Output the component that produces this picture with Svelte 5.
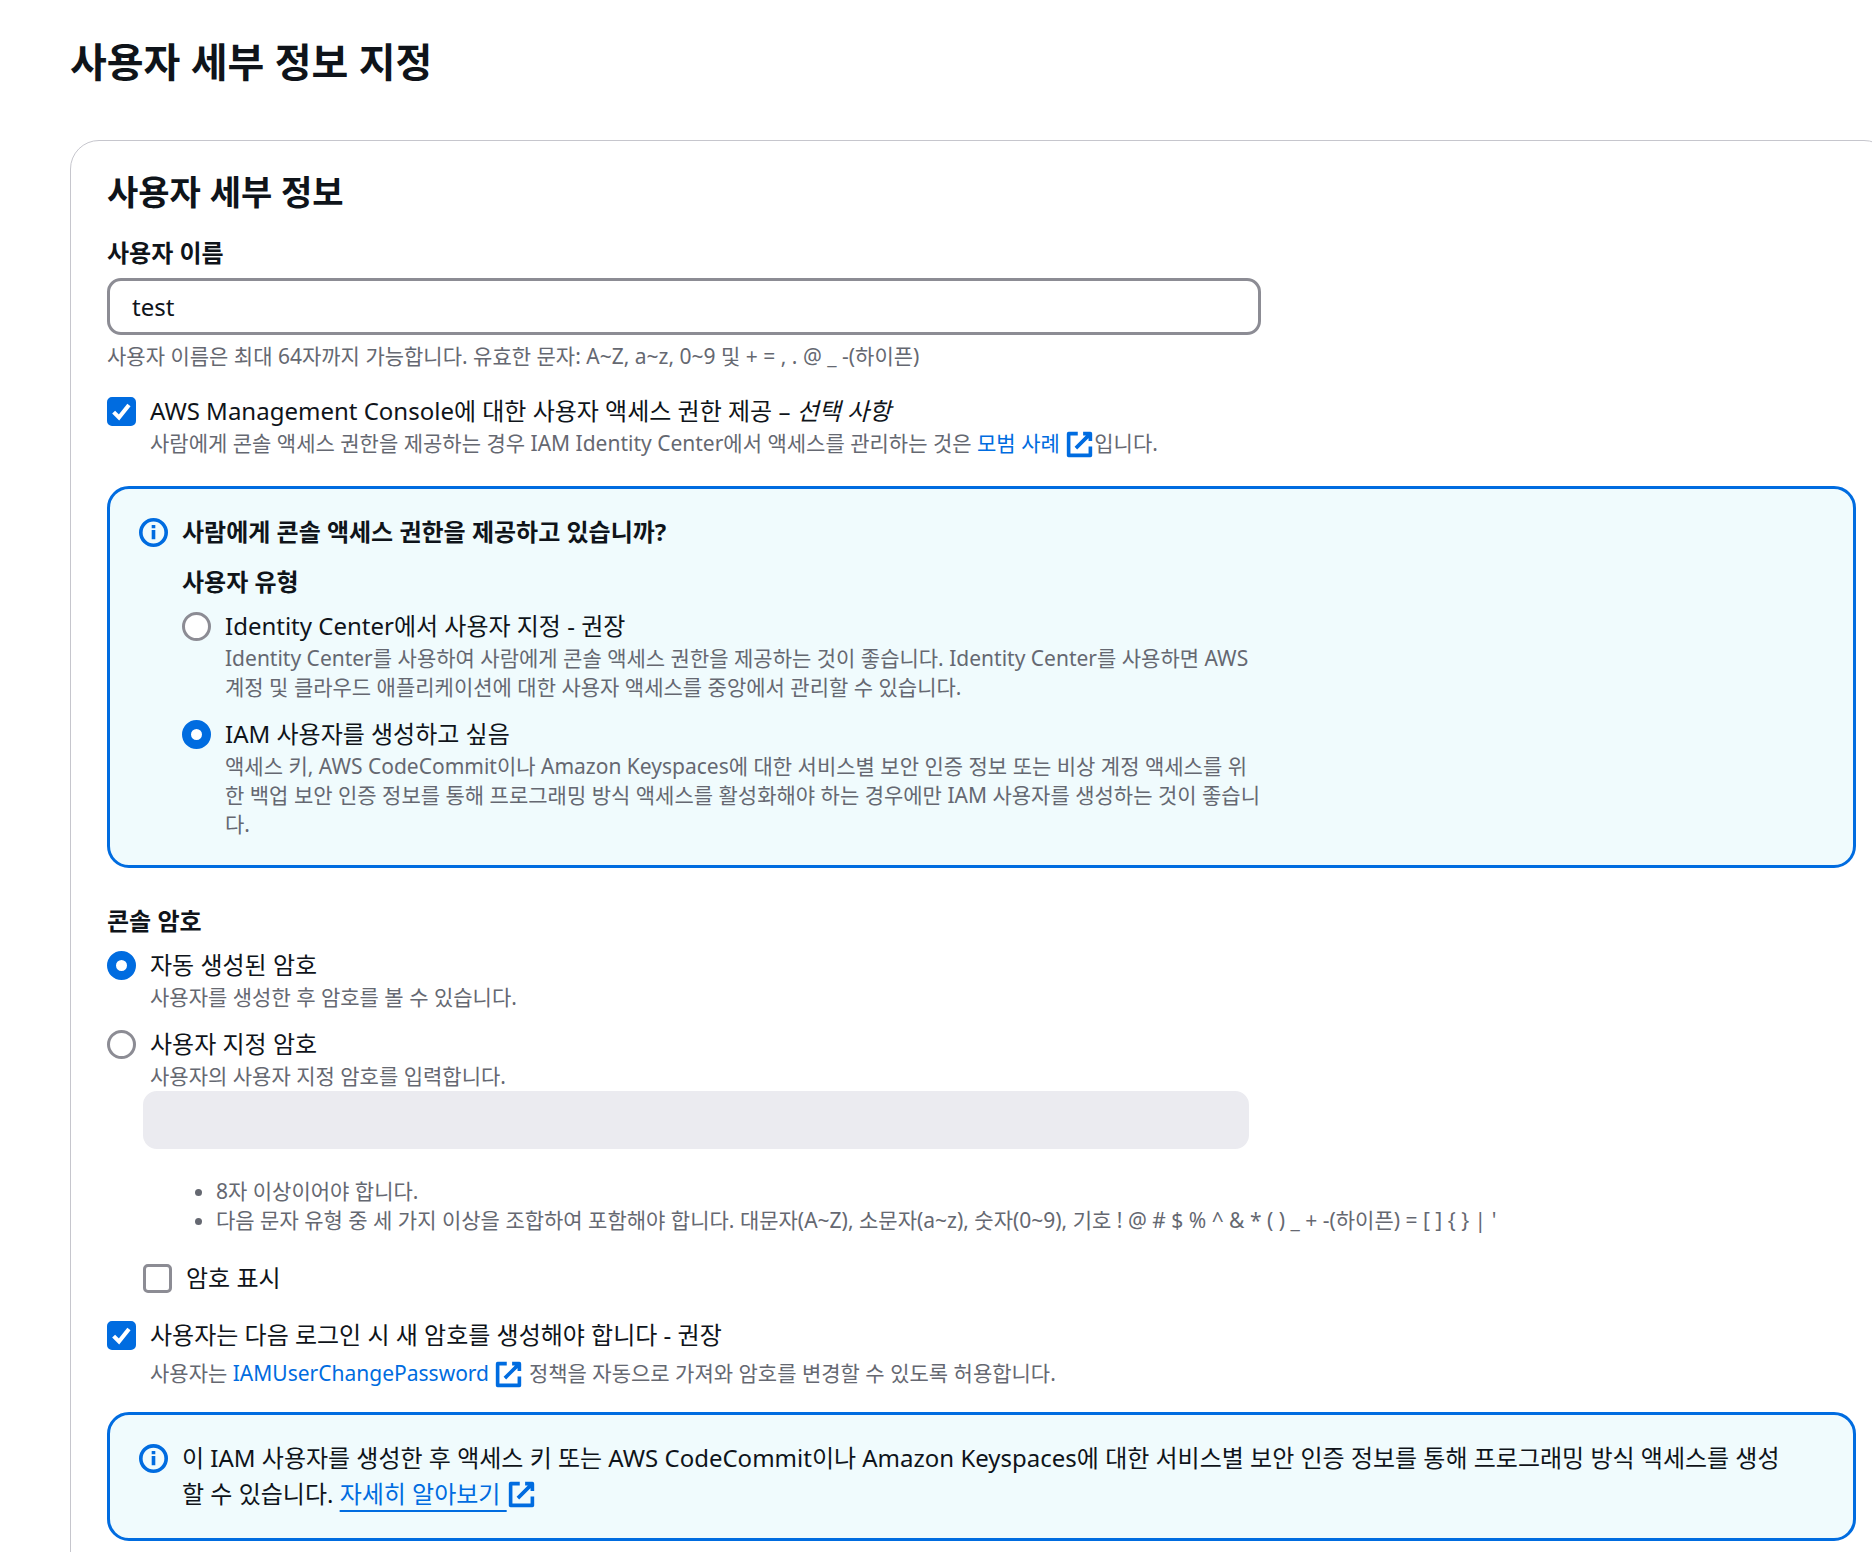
<script lang="ts">
  let userName = $state('test');
  let consoleAccess = $state(true);
  let userType = $state('iam');
  let passwordType = $state('auto');
  let customPassword = $state('');
  let showPassword = $state(false);
  let resetOnLogin = $state(true);
</script>

{#snippet externalIcon()}
  <svg class="external" viewBox="0 0 16 16" aria-hidden="true">
    <path d="M10 2h4v4M6 10l8-8M14 9.05V14H2V2h5.04" />
  </svg>
{/snippet}

{#snippet infoIcon()}
  <svg class="info" viewBox="0 0 16 16" aria-hidden="true">
    <circle cx="8" cy="8" r="7" />
    <path d="M8 11.7V6.6M8 5.6V3.8" />
  </svg>
{/snippet}

{#snippet checkMark()}
  <svg class="mark" viewBox="0 0 14 14" aria-hidden="true">
    <path d="M3.2 7.3l2.6 2.6 4.8-6" />
  </svg>
{/snippet}

<main class="page">
  <h1>사용자 세부 정보 지정</h1>

  <section class="card">
    <h2>사용자 세부 정보</h2>

    <div class="field">
      <label class="title" for="user-name">사용자 이름</label>
      <input id="user-name" class="text-input" type="text" bind:value={userName} />
      <p class="hint">사용자 이름은 최대 64자까지 가능합니다. 유효한 문자: A~Z, a~z, 0~9 및 + = , . @ _ -(하이픈)</p>
    </div>

    <div class="choice console-access">
      <span class="control">
        <input id="console-access" type="checkbox" bind:checked={consoleAccess} />
        {#if consoleAccess}{@render checkMark()}{/if}
      </span>
      <div class="choice-text">
        <label for="console-access">AWS Management Console에 대한 사용자 액세스 권한 제공 – <em>선택 사항</em></label>
        <p class="desc">
          사람에게 콘솔 액세스 권한을 제공하는 경우 IAM Identity Center에서 액세스를 관리하는 것은 <a href="#best-practice">모범 사례 {@render externalIcon()}</a>입니다.
        </p>
      </div>
    </div>

    <div class="alert">
      {@render infoIcon()}
      <div class="alert-body">
        <p class="title">사람에게 콘솔 액세스 권한을 제공하고 있습니까?</p>
        <fieldset class="user-type">
          <legend class="title">사용자 유형</legend>
          <div class="options">
            <div class="choice">
              <span class="control">
                <input id="type-idc" type="radio" value="idc" bind:group={userType} />
              </span>
              <div class="choice-text">
                <label for="type-idc">Identity Center에서 사용자 지정 - 권장</label>
                <p class="desc">Identity Center를 사용하여 사람에게 콘솔 액세스 권한을 제공하는 것이 좋습니다. Identity Center를 사용하면 AWS 계정 및 클라우드 애플리케이션에 대한 사용자 액세스를 중앙에서 관리할 수 있습니다.</p>
              </div>
            </div>
            <div class="choice">
              <span class="control">
                <input id="type-iam" type="radio" value="iam" bind:group={userType} />
              </span>
              <div class="choice-text">
                <label for="type-iam">IAM 사용자를 생성하고 싶음</label>
                <p class="desc">액세스 키, AWS CodeCommit이나 Amazon Keyspaces에 대한 서비스별 보안 인증 정보 또는 비상 계정 액세스를 위한 백업 보안 인증 정보를 통해 프로그래밍 방식 액세스를 활성화해야 하는 경우에만 IAM 사용자를 생성하는 것이 좋습니다.</p>
              </div>
            </div>
          </div>
        </fieldset>
      </div>
    </div>

    <fieldset class="password">
      <legend class="title">콘솔 암호</legend>
      <div class="options">
        <div class="choice">
          <span class="control">
            <input id="pw-auto" type="radio" value="auto" bind:group={passwordType} />
          </span>
          <div class="choice-text">
            <label for="pw-auto">자동 생성된 암호</label>
            <p class="desc">사용자를 생성한 후 암호를 볼 수 있습니다.</p>
          </div>
        </div>
        <div class="choice">
          <span class="control">
            <input id="pw-custom" type="radio" value="custom" bind:group={passwordType} />
          </span>
          <div class="choice-text">
            <label for="pw-custom">사용자 지정 암호</label>
            <p class="desc">사용자의 사용자 지정 암호를 입력합니다.</p>
          </div>
        </div>
      </div>

      <div class="custom-password">
        <input
          class="text-input"
          type={showPassword ? 'text' : 'password'}
          aria-label="사용자 지정 암호"
          disabled={passwordType !== 'custom'}
          bind:value={customPassword}
        />
        <ul class="rules">
          <li>8자 이상이어야 합니다.</li>
          <li>다음 문자 유형 중 세 가지 이상을 조합하여 포함해야 합니다. 대문자(A~Z), 소문자(a~z), 숫자(0~9), 기호 ! @ # $ % ^ & * ( ) _ + -(하이픈) = [ ] {'{ }'} | '</li>
        </ul>
        <div class="choice">
          <span class="control">
            <input id="show-password" type="checkbox" bind:checked={showPassword} />
            {#if showPassword}{@render checkMark()}{/if}
          </span>
          <label for="show-password">암호 표시</label>
        </div>
      </div>
    </fieldset>

    <div class="choice reset">
      <span class="control">
        <input id="reset-password" type="checkbox" bind:checked={resetOnLogin} />
        {#if resetOnLogin}{@render checkMark()}{/if}
      </span>
      <div class="choice-text spaced">
        <label for="reset-password">사용자는 다음 로그인 시 새 암호를 생성해야 합니다 - 권장</label>
        <p class="desc">
          사용자는 <a href="#change-password">IAMUserChangePassword {@render externalIcon()}</a> 정책을 자동으로 가져와 암호를 변경할 수 있도록 허용합니다.
        </p>
      </div>
    </div>

    <div class="alert">
      {@render infoIcon()}
      <p class="alert-body">
        이 IAM 사용자를 생성한 후 액세스 키 또는 AWS CodeCommit이나 Amazon Keyspaces에 대한 서비스별 보안 인증 정보를 통해 프로그래밍 방식 액세스를 생성할 수 있습니다. <a class="underlined" href="#learn-more">자세히 알아보기 {@render externalIcon()}</a>
      </p>
    </div>
  </section>
</main>

<style>
  :global(body) {
    background: #ffffff;
  }
  .page {
    box-sizing: border-box;
    height: 100vh;
    overflow: hidden;
    padding: 38px 0 0 70px;
    font-family: 'Noto Sans', 'Noto Sans CJK KR', sans-serif;
    font-size: 24px;
    line-height: 36px;
    color: #0f141a;
  }
  h1,
  h2,
  p,
  ul,
  fieldset {
    margin: 0;
    padding: 0;
    border: 0;
    min-width: 0;
  }
  h1 {
    font-size: 40px;
    line-height: 48px;
    font-weight: 700;
  }
  h2 {
    margin-bottom: 23px;
    font-size: 34px;
    line-height: 40px;
    font-weight: 700;
  }
  .card {
    margin: 54px -21px 0 0;
    padding: 31px 36px 72px;
    border: 1px solid #c6c6cd;
    border-radius: 29px;
  }
  .title {
    display: block;
    padding: 0;
    font-weight: 700;
  }
  .field {
    max-width: 1154px;
  }
  .text-input {
    box-sizing: border-box;
    display: block;
    width: 100%;
    height: 57px;
    padding: 0 22px;
    border: 3px solid #8c8c94;
    border-radius: 14px;
    background: #ffffff;
    font: inherit;
    color: inherit;
  }
  .text-input:disabled {
    height: 58px;
    border-color: #ebebf0;
    background: #ebebf0;
  }
  .field .text-input {
    margin: 7px 0;
  }
  .hint,
  .desc,
  .rules {
    font-size: 21px;
    line-height: 29px;
    color: #656871;
  }
  .choice {
    display: flex;
    gap: 14px;
  }
  .choice label {
    display: block;
  }
  .control {
    display: grid;
    flex: none;
    width: 29px;
    height: 29px;
    margin-top: 4px;
  }
  .control input,
  .mark {
    grid-area: 1 / 1;
  }
  .control input {
    appearance: none;
    box-sizing: border-box;
    width: 29px;
    height: 29px;
    margin: 0;
    border: 3px solid #8c8c94;
    border-radius: 5px;
    background: #ffffff;
  }
  .control input[type='radio'] {
    border-radius: 50%;
  }
  .control input[type='checkbox']:checked {
    border-color: #006ce0;
    background: #006ce0;
  }
  .control input[type='radio']:checked {
    border: 9px solid #006ce0;
  }
  .mark {
    width: 29px;
    height: 29px;
    fill: none;
    stroke: #ffffff;
    stroke-width: 2;
    pointer-events: none;
  }
  .console-access {
    margin: 22px 0 28px;
  }
  a {
    color: #006ce0;
    text-decoration: none;
  }
  .external {
    width: 29px;
    height: 29px;
    vertical-align: -6px;
    fill: none;
    stroke: currentColor;
    stroke-width: 2;
    stroke-linejoin: round;
  }
  .desc .external {
    margin: -4px 0;
    vertical-align: -4px;
  }
  .underlined {
    text-decoration: underline;
    text-decoration-thickness: 2px;
    text-underline-offset: 7px;
  }
  .alert {
    display: flex;
    gap: 14px;
    padding: 25px 72px 26px 29px;
    border: 3px solid #006ce0;
    border-radius: 22px;
    background: #f0fbfd;
  }
  .info {
    flex: none;
    width: 29px;
    height: 29px;
    margin-top: 4px;
    fill: none;
    stroke: #006ce0;
    stroke-width: 2;
  }
  .user-type {
    max-width: 1083px;
    margin-top: 14px;
  }
  .options {
    display: flex;
    flex-direction: column;
    gap: 14px;
    margin-top: 8px;
  }
  .password {
    margin-top: 35px;
  }
  .custom-password {
    padding-left: 36px;
  }
  .custom-password .text-input {
    max-width: 1106px;
  }
  .rules {
    margin: 28px 0 25px;
    padding-left: 73px;
  }
  .reset {
    margin: 21px 0 24px;
  }
  .spaced .desc {
    margin-top: 6px;
  }
</style>
